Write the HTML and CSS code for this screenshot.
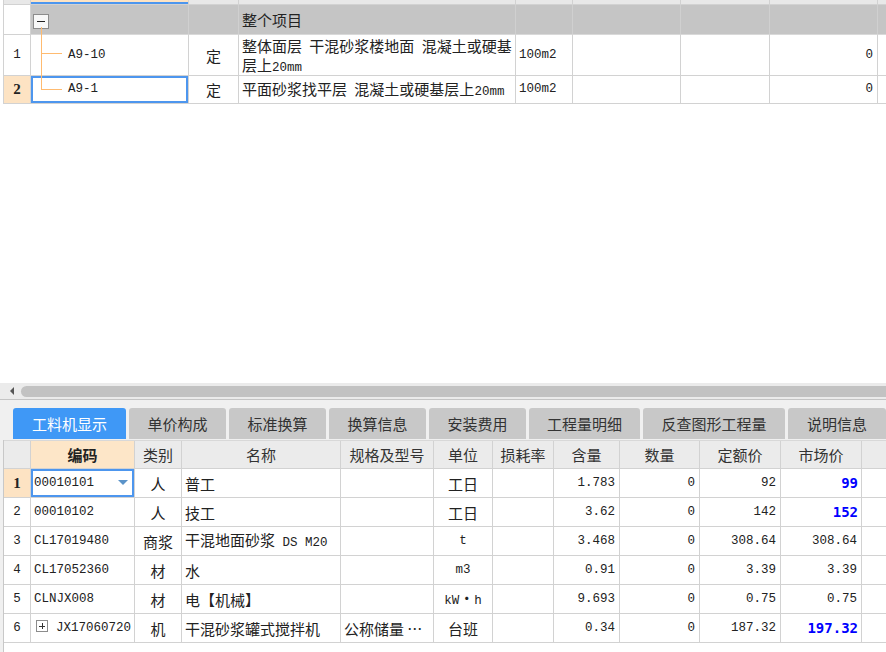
FILE: index.html
```html
<!DOCTYPE html>
<html lang="zh">
<head>
<meta charset="utf-8">
<title>工料机显示</title>
<link rel="stylesheet" href="styles.css">
</head>
<body>
<div class="app">
  <section class="top">
    <table class="grid grid-top">
      <colgroup>
        <col class="w27"><col class="w158"><col class="w50"><col class="w277"><col class="w57"><col class="w108"><col class="w89"><col class="w108"><col class="w80">
      </colgroup>
      <tr class="r-head">
        <td class="hd"></td><td class="hd-sel"></td><td class="hd"></td><td class="hd"></td><td class="hd"></td><td class="hd"></td><td class="hd"></td><td class="hd"></td><td class="hd last"></td>
      </tr>
      <tr class="r-grp">
        <td class="rh"></td>
        <td class="g tree-root"><span class="minus"></span></td>
        <td class="g"></td>
        <td class="g bold">整个项目</td>
        <td class="g"></td><td class="g"></td><td class="g"></td><td class="g"></td><td class="g last"></td>
      </tr>
      <tr class="r-1">
        <td class="rh">1</td>
        <td class="tree-code m">A9-10</td>
        <td class="c">定</td>
        <td class="name two">整体面层 干混砂浆楼地面 混凝土或硬基<br>层上<span class="m">20mm</span></td>
        <td class="m">100m2</td>
        <td></td><td></td>
        <td class="num">0</td>
        <td class="last"></td>
      </tr>
      <tr class="r-2">
        <td class="rh cur">2</td>
        <td class="tree-code m focus">A9-1</td>
        <td class="c">定</td>
        <td class="name">平面砂浆找平层 混凝土或硬基层上<span class="m">20mm</span></td>
        <td class="m">100m2</td>
        <td></td><td></td>
        <td class="num">0</td>
        <td class="last"></td>
      </tr>
    </table>
    <svg class="tree-lines" width="70" height="100" viewBox="0 0 70 100">
      <path d="M41.5 27 V89.5 M41.5 53.5 H62 M41.5 89.5 H62" stroke="#ffbb70" stroke-width="1" fill="none" shape-rendering="crispEdges"/>
    </svg>
  </section>

  <div class="hscroll"><span class="arrow"></span><span class="thumb"></span></div>

  <nav class="tabs">
    <span class="tab active t1">工料机显示</span>
    <span class="tab t2">单价构成</span>
    <span class="tab t2">标准换算</span>
    <span class="tab t2">换算信息</span>
    <span class="tab t2">安装费用</span>
    <span class="tab t3">工程量明细</span>
    <span class="tab t4">反查图形工程量</span>
    <span class="tab t5">说明信息</span>
  </nav>

  <section class="bottom">
    <table class="grid grid-bottom">
      <colgroup>
        <col class="w27"><col class="w104"><col class="w47"><col class="w159"><col class="w93"><col class="w59"><col class="w61"><col class="w66"><col class="w80"><col class="w81"><col class="w81"><col class="w40">
      </colgroup>
      <tr class="b-head">
        <th class="corner"></th>
        <th class="sel-head">编码</th>
        <th>类别</th>
        <th>名称</th>
        <th>规格及型号</th>
        <th>单位</th>
        <th>损耗率</th>
        <th>含量</th>
        <th>数量</th>
        <th>定额价</th>
        <th>市场价</th>
        <th class="last"></th>
      </tr>
      <tr>
        <td class="rh cur">1</td>
        <td class="m focus">00010101<span class="caret"></span></td>
        <td class="c">人</td>
        <td>普工</td>
        <td></td>
        <td class="c">工日</td>
        <td></td>
        <td class="num">1.783</td>
        <td class="num">0</td>
        <td class="num">92</td>
        <td class="num hot">99</td>
        <td class="last"></td>
      </tr>
      <tr>
        <td class="rh">2</td>
        <td class="m">00010102</td>
        <td class="c">人</td>
        <td>技工</td>
        <td></td>
        <td class="c">工日</td>
        <td></td>
        <td class="num">3.62</td>
        <td class="num">0</td>
        <td class="num">142</td>
        <td class="num hot">152</td>
        <td class="last"></td>
      </tr>
      <tr>
        <td class="rh">3</td>
        <td class="m">CL17019480</td>
        <td class="c">商浆</td>
        <td>干混地面砂浆<span class="m"> DS M20</span></td>
        <td></td>
        <td class="c m">t</td>
        <td></td>
        <td class="num">3.468</td>
        <td class="num">0</td>
        <td class="num">308.64</td>
        <td class="num">308.64</td>
        <td class="last"></td>
      </tr>
      <tr>
        <td class="rh">4</td>
        <td class="m">CL17052360</td>
        <td class="c">材</td>
        <td>水</td>
        <td></td>
        <td class="c m">m3</td>
        <td></td>
        <td class="num">0.91</td>
        <td class="num">0</td>
        <td class="num">3.39</td>
        <td class="num">3.39</td>
        <td class="last"></td>
      </tr>
      <tr>
        <td class="rh">5</td>
        <td class="m">CLNJX008</td>
        <td class="c">材</td>
        <td>电【机械】</td>
        <td></td>
        <td class="c"><span class="m">kW</span>・<span class="m">h</span></td>
        <td></td>
        <td class="num">9.693</td>
        <td class="num">0</td>
        <td class="num">0.75</td>
        <td class="num">0.75</td>
        <td class="last"></td>
      </tr>
      <tr>
        <td class="rh">6</td>
        <td class="m"><span class="plus"></span>JX17060720</td>
        <td class="c">机</td>
        <td>干混砂浆罐式搅拌机</td>
        <td>公称储量 …</td>
        <td class="c">台班</td>
        <td></td>
        <td class="num">0.34</td>
        <td class="num">0</td>
        <td class="num">187.32</td>
        <td class="num hot">197.32</td>
        <td class="last"></td>
      </tr>
    </table>
  </section>
</div>
</body>
</html>
```

FILE: styles.css
```css
* { box-sizing: border-box; }

html, body {
  margin: 0;
  padding: 0;
  background: #f0f0f0;
  overflow: hidden;
}

.app {
  width: 886px;
  height: 652px;
  overflow: hidden;
  font-family: "Noto Sans CJK SC", "Noto Sans", sans-serif;
  font-size: 15px;
  color: #222;
}

/* ---------- shared grid ---------- */
.grid {
  border-collapse: separate;
  border-spacing: 0;
  table-layout: fixed;
}

.grid td, .grid th {
  border-right: 1px solid #d2d2d2;
  border-bottom: 1px solid #d2d2d2;
  padding: 0 3px;
  white-space: nowrap;
  overflow: hidden;
  vertical-align: middle;
  line-height: 17px;
  text-align: left;
  font-weight: normal;
}

.grid .last { border-right: none; }

.w27 { width: 27px; }
.w40 { width: 40px; }
.w47 { width: 47px; }
.w50 { width: 50px; }
.w57 { width: 57px; }
.w59 { width: 59px; }
.w61 { width: 61px; }
.w66 { width: 66px; }
.w80 { width: 80px; }
.w81 { width: 81px; }
.w89 { width: 89px; }
.w93 { width: 93px; }
.w104 { width: 104px; }
.w108 { width: 108px; }
.w158 { width: 158px; }
.w159 { width: 159px; }
.w277 { width: 277px; }

.m {
  font-family: "Liberation Mono", "DejaVu Sans Mono", monospace;
  font-size: 12.5px;
}

.c { text-align: center !important; }

.num {
  text-align: right !important;
  padding-right: 4px !important;
  font-family: "Liberation Mono", "DejaVu Sans Mono", monospace;
  font-size: 12.5px;
}

.num.hot {
  color: #0000ff;
  font-weight: bold;
  font-family: "DejaVu Sans Mono", monospace;
  font-size: 14px;
  padding-right: 3px !important;
}

.bold { font-weight: bold; }

.rh {
  text-align: center !important;
  font-family: "Liberation Mono", "DejaVu Sans Mono", monospace;
  font-size: 12.5px;
  padding: 0 !important;
  background: #fff;
}

.rh.cur {
  background: #fde3c3;
  font-weight: bold;
  font-family: "Liberation Serif", serif;
  font-size: 15px;
}

.focus {
  box-shadow: inset 0 0 0 2px #4d96ee;
}

/* ---------- top tree grid ---------- */
.top {
  position: relative;
  height: 383px;
  background: #fff;
  overflow: hidden;
}

.grid-top {
  width: 955px;
  margin-left: 3px;
  border-left: 1px solid #d2d2d2;
}

.grid-top td { background: #fff; }

.r-head td { height: 5px; padding: 0; }
.grid-top .hd { background: #e8e8e8; }
.grid-top .hd-sel {
  background: #fde3c3;
  box-shadow: inset 0 -2px 0 #4d96ee;
}

.r-grp td { height: 30px; }
.grid-top .g {
  background: #c5c5c5;
  border-right-color: #d0d0d0;
  border-bottom-color: #d9d9d9;
}

.grid-top .rh { background: #fff; }
.grid-top .rh.cur { background: #fde3c3; }

.tree-root { padding-left: 2px !important; }

.minus {
  display: inline-block;
  vertical-align: middle;
  position: relative;
  width: 16px;
  height: 15px;
  border: 1px solid #8c8c8c;
  background: #f8f8f8;
}
.minus::after {
  content: "";
  position: absolute;
  left: 3px;
  right: 3px;
  top: 6px;
  height: 1px;
  background: #222;
}

.r-1 td { height: 41px; }
.r-2 td { height: 28px; }

.tree-code { padding-left: 37px !important; }

.name { word-spacing: 4px; }
.name .m { line-height: 1; }
.name.two { line-height: 19px; }

.tree-lines {
  position: absolute;
  left: 0;
  top: 0;
  pointer-events: none;
}

/* ---------- scroll bar ---------- */
.hscroll {
  display: flex;
  align-items: center;
  height: 17px;
  background: #ebebeb;
  border-bottom: 1px solid #c4c4c4;
  padding-left: 10px;
  overflow: hidden;
}

.arrow {
  width: 0;
  height: 0;
  border-top: 4px solid transparent;
  border-bottom: 4px solid transparent;
  border-right: 4px solid #555;
  flex: none;
}

.thumb {
  flex: none;
  width: 900px;
  height: 11px;
  margin-left: 7px;
  border-radius: 6px;
  background: #c2c2c2;
}

/* ---------- tabs ---------- */
.tabs {
  display: flex;
  gap: 3px;
  padding: 8px 0 0 13px;
  height: 40px;
  overflow: hidden;
  background: #f0f0f0;
}

.tab {
  flex: none;
  height: 31px;
  line-height: 31px;
  text-align: center;
  background: #c8c8c8;
  color: #333;
  border-radius: 3px 3px 0 0;
  font-size: 15px;
}

.tab.active {
  background: #3f98f6;
  color: #fff;
}

.t1 { width: 113px; }
.t2 { width: 97px; }
.t3 { width: 111px; }
.t4 { width: 142px; }
.t5 { width: 98px; }

/* ---------- bottom grid ---------- */
.bottom {
  margin-left: 3px;
  border-left: 1px solid #c8c8c8;
  background: #fff;
  height: 212px;
}

.grid-bottom {
  width: 898px;
  border-top: 1px solid #d8d8d8;
}

.grid-bottom th {
  height: 28px;
  background: #ebebeb;
  text-align: center;
  color: #333;
}

.grid-bottom th.sel-head {
  background: #fde6c8;
  font-weight: bold;
  color: #222;
}

.grid-bottom td { height: 29px; }

.caret {
  display: inline-block;
  vertical-align: middle;
  margin-left: 24px;
  width: 0;
  height: 0;
  border-left: 5px solid transparent;
  border-right: 5px solid transparent;
  border-top: 5px solid #5b93c9;
}

.plus {
  display: inline-block;
  vertical-align: middle;
  position: relative;
  width: 12px;
  height: 12px;
  margin: -2px 8px 0 2px;
  border: 1px solid #8c8c8c;
  background: #fff;
}
.plus::before, .plus::after {
  content: "";
  position: absolute;
  background: #333;
}
.plus::before { left: 2px; right: 2px; top: 4.5px; height: 1px; }
.plus::after { top: 2px; bottom: 2px; left: 4.5px; width: 1px; }
```
